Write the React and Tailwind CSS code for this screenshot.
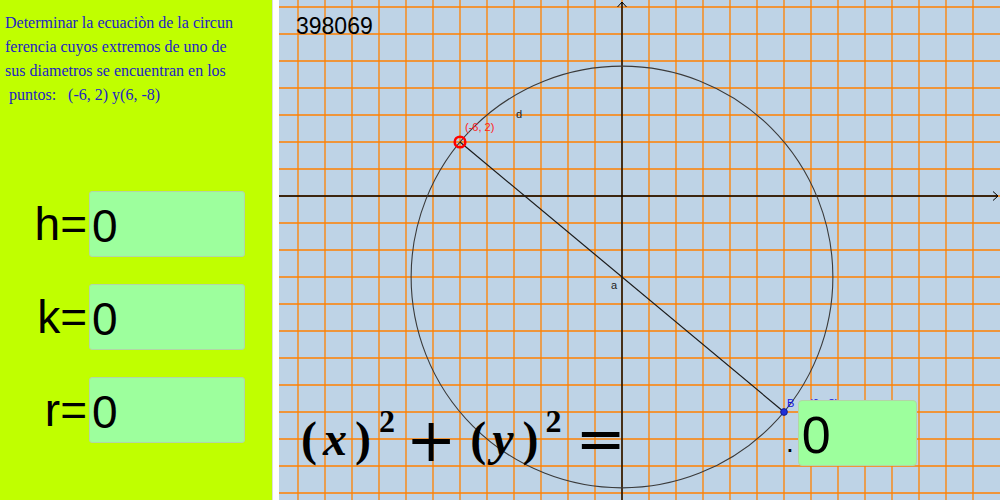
import React from 'react';

const ORIGIN_X = 622;
const ORIGIN_Y = 196;
const UNIT = 27;

const vLines = [];
for (let k = -12; k <= 13; k++) vLines.push(ORIGIN_X + k * UNIT);
const hLines = [];
for (let k = -7; k <= 11; k++) hLines.push(ORIGIN_Y + k * UNIT);

const toPx = (x, y) => [ORIGIN_X + x * UNIT, ORIGIN_Y - y * UNIT];

const InputRow = ({ label }) => (
  <div className="flex items-center">
    <div className="w-[89px] pr-[2px] text-right text-[46px] leading-none text-black">{label}</div>
    <div className="flex h-[66px] w-[156px] items-center rounded-[3px] border border-[#b2d6a6] bg-[#9dff9d] pl-[2px] pt-[4px] text-[46px] leading-none text-black">
      0
    </div>
  </div>
);

const Graph = () => {
  const [ax, ay] = toPx(-6, 2);
  const [bx, by] = toPx(6, -8);
  const [cx, cy] = toPx(0, -3);
  const r = Math.sqrt(61) * UNIT;

  return (
    <svg width="721" height="500" viewBox="279 0 721 500" className="block">
      <rect x="279" y="0" width="721" height="500" fill="#bed3e6" />
      {vLines.map((x) => (
        <line key={'v' + x} x1={x} y1="0" x2={x} y2="500" stroke="#ff8000" strokeWidth="1.3" />
      ))}
      {hLines.map((y) => (
        <line key={'h' + y} x1="279" y1={y} x2="1000" y2={y} stroke="#ff8000" strokeWidth="1.3" />
      ))}

      {/* axes */}
      <line x1="279" y1={ORIGIN_Y} x2="998" y2={ORIGIN_Y} stroke="#000" strokeWidth="1.4" />
      <polyline points="993,191.5 998,196 993,200.5" fill="none" stroke="#000" strokeWidth="1" />
      <line x1={ORIGIN_X} y1="500" x2={ORIGIN_X} y2="2" stroke="#000" strokeWidth="1.4" />
      <polyline points="617.5,7 622,2 626.5,7" fill="none" stroke="#000" strokeWidth="1" />

      {/* circle and diameter */}
      <circle cx={cx} cy={cy} r={r} fill="none" stroke="#3a3a3a" strokeWidth="1.1" />
      <line x1={ax} y1={ay} x2={bx} y2={by} stroke="#1a1a1a" strokeWidth="1.2" />

      <circle cx={ax} cy={ay} r="5.3" fill="none" stroke="#ff0000" strokeWidth="2.6" />
      <circle cx={bx} cy={by} r="3.4" fill="#1f2fd8" stroke="#0a1480" strokeWidth="0.8" />

      <g fontFamily="'Liberation Sans', Arial, sans-serif" fontSize="11">
        <text x="465" y="131" fill="#ff2020">(-6, 2)</text>
        <text x="516" y="118" fill="#222">d</text>
        <text x="611" y="289" fill="#222">a</text>
        <text x="787" y="407" fill="#1010e0">B</text>
        <text x="809" y="407" fill="#1010e0">(6, -8)</text>
      </g>
    </svg>
  );
};

export default function App() {
  return (
    <div className="flex h-[500px] w-[1000px] overflow-hidden bg-white font-['Liberation_Sans',Arial,sans-serif]">
      <div className="flex w-[272px] shrink-0 flex-col bg-[#c0ff00]">
        <div className="whitespace-pre pl-[5px] pt-[11px] font-['Liberation_Serif','Times_New_Roman',serif] text-[16px] leading-[24px] text-[#2323c4]">
          <div>Determinar la ecuaciòn de la circun</div>
          <div>ferencia cuyos extremos de uno de</div>
          <div>sus diametros se encuentran en los</div>
          <div> puntos:   (-6, 2) y(6, -8)</div>
        </div>
        <div className="mt-[84px] flex flex-col gap-[27px]">
          <InputRow label="h=" />
          <InputRow label="k=" />
          <InputRow label="r=" />
        </div>
      </div>

      <div className="w-[7px] shrink-0 border-l border-[#dcdcdc] bg-white" />

      <div className="relative w-[721px] shrink-0">
        <Graph />

        <div className="absolute left-[17px] top-[15px] text-[23px] leading-none text-black">398069</div>

        {/* (x)^2 + (y)^2 = */}
        <div className="absolute left-[22px] top-[404px] flex items-baseline whitespace-nowrap font-['Liberation_Serif','Times_New_Roman',serif] font-bold leading-none text-black">
          <span className="text-[48px]">(</span>
          <span className="ml-[6px] text-[48px] italic">x</span>
          <span className="ml-[8px] text-[48px]">)</span>
          <span className="relative -top-[23px] ml-[8px] text-[32px]">2</span>
          <span className="relative top-[6px] ml-[11px] font-['DejaVu_Sans',sans-serif] text-[60px] font-normal">+</span>
          <span className="ml-[14px] text-[48px]">(</span>
          <span className="ml-[6px] text-[48px] italic">y</span>
          <span className="ml-[9px] text-[48px]">)</span>
          <span className="relative -top-[23px] ml-[7px] text-[32px]">2</span>
          <span className="relative top-[4px] ml-[14px] font-['DejaVu_Sans',sans-serif] text-[60px] font-normal">=</span>
        </div>

        <div className="absolute left-[507px] top-[400px] flex items-end">
          <span className="mb-[9px] mr-[4px] text-[28px] leading-none text-black">.</span>
          <div className="flex h-[66px] w-[119px] items-center rounded-[4px] border border-[#b2d6a6] bg-[#9dff9d] pl-[3px] pt-[4px] text-[52px] leading-none text-black">
            0
          </div>
        </div>
      </div>
    </div>
  );
}
